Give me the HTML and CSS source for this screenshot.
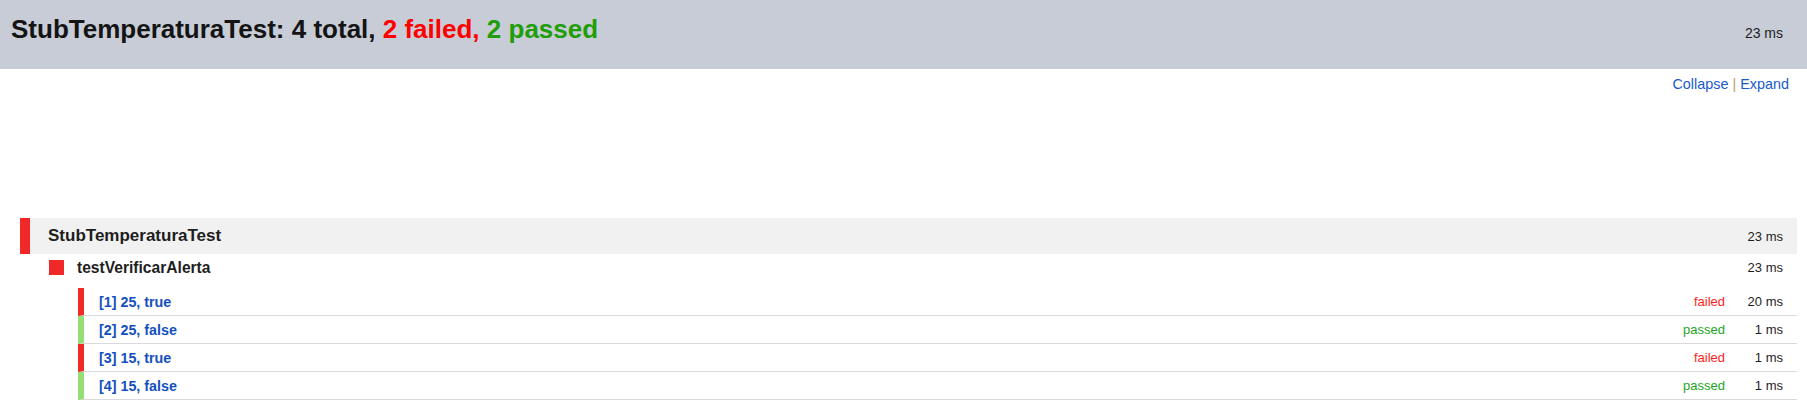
FILE: index.html
```html
<!DOCTYPE html>
<html>
<head>
<meta charset="utf-8">
<title>Test Results — StubTemperaturaTest</title>
<link rel="stylesheet" href="styles.css">
</head>
<body>
<div class="header">
  <h1 class="title">StubTemperaturaTest: 4 total, <span class="t-failed">2 failed,</span> <span class="t-passed">2 passed</span></h1>
  <span class="header-time">23 ms</span>
</div>
<div class="toolbar">
  <a class="link" href="#">Collapse</a><span class="sep">|</span><a class="link" href="#">Expand</a>
</div>
<div class="tree">
  <div class="suite">
    <span class="suite-name">StubTemperaturaTest</span>
    <span class="time">23 ms</span>
  </div>
  <div class="method">
    <span class="method-mark"></span>
    <span class="method-name">testVerificarAlerta</span>
    <span class="time">23 ms</span>
  </div>
  <div class="tests">
    <div class="test is-failed">
      <a class="test-name" href="#">[1] 25, true</a>
      <span class="status failed">failed</span>
      <span class="test-time">20 ms</span>
    </div>
    <div class="test is-passed">
      <a class="test-name" href="#">[2] 25, false</a>
      <span class="status passed">passed</span>
      <span class="test-time">1 ms</span>
    </div>
    <div class="test is-failed">
      <a class="test-name" href="#">[3] 15, true</a>
      <span class="status failed">failed</span>
      <span class="test-time">1 ms</span>
    </div>
    <div class="test is-passed">
      <a class="test-name" href="#">[4] 15, false</a>
      <span class="status passed">passed</span>
      <span class="test-time">1 ms</span>
    </div>
  </div>
</div>
</body>
</html>
```
FILE: styles.css
```css
body {
  margin: 0;
  padding: 0;
  font-family: "Liberation Sans", Arial, sans-serif;
  font-size: 13px;
  color: #1e1e1e;
  background: #ffffff;
}

.header {
  height: 69px;
  box-sizing: border-box;
  background: #c7ccd6;
  display: flex;
  align-items: baseline;
  justify-content: space-between;
  padding: 14px 24px 0 11px;
}

.title {
  margin: 0;
  font-size: 26px;
  line-height: 30px;
  font-weight: bold;
  color: #141414;
}

.t-failed { color: #ff0000; }
.t-passed { color: #1f9e0a; }

.header-time {
  font-size: 14px;
  line-height: 16px;
  color: #1e1e1e;
}

.toolbar {
  display: flex;
  justify-content: flex-end;
  align-items: baseline;
  padding: 7px 18px 0 0;
  font-size: 14.4px;
  line-height: 16px;
  height: 23px;
  box-sizing: border-box;
}

.link {
  color: #1a5acb;
  text-decoration: none;
}

.sep {
  color: #b89c6c;
  margin: 0 4px;
}

.tree {
  margin: 126px 10px 0 20px;
}

.suite {
  height: 36px;
  box-sizing: border-box;
  display: flex;
  align-items: center;
  background: #f1f1f1;
  border-left: 10px solid #f02828;
  padding: 0 14px 0 18px;
}

.suite-name {
  flex: 1;
  font-size: 17px;
  font-weight: bold;
  color: #1e1e1e;
}

.time {
  font-size: 13px;
  color: #1e1e1e;
}

.method {
  height: 27px;
  display: flex;
  align-items: center;
  padding: 0 14px 0 29px;
}

.method-mark {
  width: 15px;
  height: 15px;
  background: #f02828;
  margin-right: 13px;
}

.method-name {
  flex: 1;
  font-size: 15.6px;
  font-weight: bold;
  color: #1e1e1e;
}

.tests {
  margin: 7px 0 0 58px;
}

.test {
  height: 28px;
  box-sizing: border-box;
  display: flex;
  align-items: center;
  border-bottom: 1px solid #dadada;
  padding: 0 14px 0 15px;
}

.test.is-failed { border-left: 6px solid #f02828; }
.test.is-passed { border-left: 6px solid #93df73; }

.test-name {
  flex: 1;
  font-size: 14.3px;
  font-weight: bold;
  color: #1450bd;
  text-decoration: none;
}

.status {
  font-size: 13px;
}

.status.failed { color: #ff1c1c; }
.status.passed { color: #23a523; }

.test-time {
  width: 58px;
  text-align: right;
  font-size: 13px;
  color: #1e1e1e;
}
```
